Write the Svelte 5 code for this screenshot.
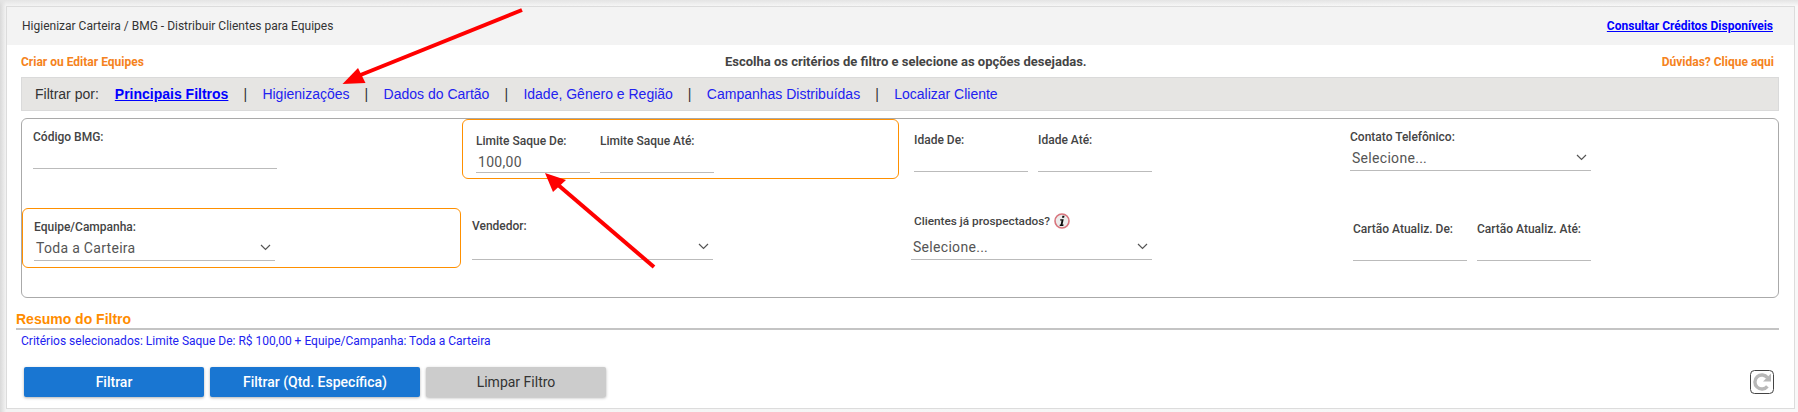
<script>
  const tabs = ['Higienizações', 'Dados do Cartão', 'Idade, Gênero e Região', 'Campanhas Distribuídas', 'Localizar Cliente'];
</script>

{#snippet chevron()}
  <svg class="chev" width="11" height="7" viewBox="0 0 11 7"><path d="M1 1l4.5 4.5L10 1" fill="none" stroke="#555" stroke-width="1.2" /></svg>
{/snippet}

<div class="page">
  <div class="card">
    <header class="head">
      <span class="crumb">Higienizar Carteira / BMG - Distribuir Clientes para Equipes</span>
      <a class="credits" href="#c">Consultar Créditos Disponíveis</a>
    </header>

    <div class="intro">
      <a class="orange" href="#e">Criar ou Editar Equipes</a>
      <strong class="choose">Escolha os critérios de filtro e selecione as opções desejadas.</strong>
      <a class="orange" href="#d">Dúvidas? Clique aqui</a>
    </div>

    <nav class="tabs">
      <span class="by">Filtrar por:</span>
      <a class="tab active" href="#p">Principais Filtros</a>
      {#each tabs as t}
        <span class="sep">|</span>
        <a class="tab" href="#t">{t}</a>
      {/each}
    </nav>

    <section class="panel">
      <div class="cell p11 l11">
        <div class="field w244"><label>Código BMG:</label><div class="ctl"></div></div>
      </div>
      <div class="cell">
        <div class="box top">
          <div class="field w114"><label>Limite Saque De:</label><div class="ctl"><span class="val">100,00</span></div></div>
          <div class="field w114"><label>Limite Saque Até:</label><div class="ctl"></div></div>
        </div>
      </div>
      <div class="cell p14 l12 pair">
        <div class="field w114"><label>Idade De:</label><div class="ctl"></div></div>
        <div class="field w114"><label>Idade Até:</label><div class="ctl"></div></div>
      </div>
      <div class="cell p11 l8">
        <div class="field w241"><label>Contato Telefônico:</label><div class="ctl sel"><span class="val">Selecione...</span>{@render chevron()}</div></div>
      </div>

      <div class="cell">
        <div class="box bottom">
          <div class="field w241"><label>Equipe/Campanha:</label><div class="ctl sel"><span class="val">Toda a Carteira</span>{@render chevron()}</div></div>
        </div>
      </div>
      <div class="cell p11 l10">
        <div class="field w241"><label>Vendedor:</label><div class="ctl sel">{@render chevron()}</div></div>
      </div>
      <div class="cell p6 l9">
        <div class="field w241">
          <label class="lab-i">Clientes já prospectados?
            <svg class="info" width="16" height="16" viewBox="0 0 16 16">
              <circle cx="8" cy="8" r="7" fill="#ececec" stroke="#d8747c" stroke-width="1.6" />
              <path d="M8.4 2.8h2.1l-.4 2H8zM6.3 6.2h3.4l-1.2 5.4h1.1l-.3 1.3H5.6l.3-1.3h.8l.8-4.1H6z" fill="#0c0c0c" />
            </svg>
          </label>
          <div class="ctl tall"><span class="val">Selecione...</span>{@render chevron()}</div>
        </div>
      </div>
      <div class="cell p14 l11 pair">
        <div class="field w114"><label>Cartão Atualiz. De:</label><div class="ctl"></div></div>
        <div class="field w114"><label>Cartão Atualiz. Até:</label><div class="ctl"></div></div>
      </div>
    </section>

    <h2 class="resume">Resumo do Filtro</h2>
    <p class="criteria">Critérios selecionados: Limite Saque De: R$ 100,00 + Equipe/Campanha: Toda a Carteira</p>

    <div class="actions">
      <button class="btn blue b1">Filtrar</button>
      <button class="btn blue b2">Filtrar (Qtd. Específica)</button>
      <button class="btn grey b3">Limpar Filtro</button>
      <span class="refresh">
        <svg width="24" height="24" viewBox="0 0 24 24">
          <rect x="0.5" y="0.5" width="23" height="23" rx="4" fill="#fff" stroke="#444" />
          <path d="M17.4 16.4a7 7 0 1 1 .1-8.6" fill="none" stroke="#b8b8b8" stroke-width="3.4" />
          <path d="M21 3.5v8h-8z" fill="#b8b8b8" />
        </svg>
      </span>
    </div>
  </div>

  <svg class="arrows" width="1798" height="412" viewBox="0 0 1798 412">
    <path d="M522 10L358 76" stroke="#f00" stroke-width="4" fill="none" />
    <path d="M342.5 84L358 68 365.5 83z" fill="#f00" />
    <path d="M654 267L557 184" stroke="#f00" stroke-width="4" fill="none" />
    <path d="M545 173L566 180 553 192z" fill="#f00" />
  </svg>
</div>

<style>
  :global(body) { margin: 0; background: #f7f7f7; }
  * { box-sizing: border-box; }
  .page {
    position: relative;
    width: 1798px;
    height: 412px;
    padding: 6px 3px 0 6px;
    overflow: hidden;
    background:
      linear-gradient(180deg, #e4e4e4 0, rgba(246, 246, 246, 0) 6px),
      linear-gradient(90deg, #d9d9d9 0, #f3f3f3 6px, #f8f8f8 100%);
    font-family: Roboto, sans-serif;
    color: #444;
  }
  .card {
    height: 403px;
    background: #fff;
    border: 1px solid #dcdcdc;
    display: flex;
    flex-direction: column;
  }
  .head {
    height: 38px;
    flex: none;
    background: #f3f3f3;
    display: flex;
    justify-content: space-between;
    align-items: center;
    padding: 0 21px 1px 15px;
    font-size: 12px;
  }
  .crumb { color: #333; }
  .credits { color: #00f; font-weight: 700; text-decoration: underline; }
  .intro {
    height: 32px;
    flex: none;
    display: flex;
    justify-content: space-between;
    align-items: center;
    padding: 1px 20px 0 14px;
    font-size: 12px;
  }
  .orange { color: #f58220; font-weight: 700; text-decoration: none; }
  .choose { color: #444; font-weight: 700; font-size: 13px; margin-left: 6px; }
  .tabs {
    height: 34px;
    margin: 0 15px 0 14px;
    flex: none;
    display: flex;
    align-items: center;
    padding: 0 0 1px 13px;
    background: #e6e5e3;
    border: 1px solid #dadada;
    font-family: "Liberation Sans", Arial, sans-serif;
    font-size: 14px;
    color: #333;
  }
  .by { margin-right: 16px; }
  .tab { color: #2222f0; text-decoration: none; }
  .tab.active { color: #00f; font-weight: 700; text-decoration: underline; }
  .sep { margin: 0 15px 0 15px; width: 4px; }
  .panel {
    height: 180px;
    margin: 7px 15px 0 14px;
    flex: none;
    border: 1px solid #aaa;
    border-radius: 6px;
    display: grid;
    grid-template-columns: repeat(4, 440px);
    grid-template-rows: 89px 89px;
  }
  .pair { display: flex; gap: 10px; }
  .p6 { padding-top: 6px; }
  .p11 { padding-top: 11px; }
  .p14 { padding-top: 14px; }
  .l8 { padding-left: 8px; }
  .l9 { padding-left: 9px; }
  .l10 { padding-left: 10px; }
  .l11 { padding-left: 11px; }
  .l12 { padding-left: 12px; }
  .box {
    border: 1px solid #ff9000;
    border-radius: 6px;
    display: flex;
    gap: 10px;
  }
  .box.top { width: 437px; height: 60px; padding: 14px 0 0 13px; }
  .box.bottom { width: 439px; height: 60px; padding: 11px 0 0 11px; }
  .field { display: flex; flex-direction: column; flex: none; }
  .w244 { width: 244px; }
  .w241 { width: 241px; }
  .w114 { width: 114px; }
  label {
    display: flex;
    align-items: center;
    height: 14px;
    font-size: 12px;
    font-weight: 500;
    color: #444;
    white-space: nowrap;
  }
  .lab-i { gap: 4px; margin-left: 3px; font-size: 11.8px; }
  .info { flex: none; }
  .ctl {
    height: 25px;
    border-bottom: 1px solid #bbb;
    display: flex;
    align-items: flex-end;
    justify-content: space-between;
    padding: 0 5px 0 2px;
    position: relative;
  }
  .sel { height: 27px; padding-bottom: 2px; }
  .tall { height: 32px; padding-bottom: 2px; }
  .val { font-size: 14px; line-height: 20px; color: #555; letter-spacing: 0.3px; }
  .chev { position: absolute; right: 4px; bottom: 9px; }
  .resume {
    margin: 12px 0 0 9px;
    height: 18px;
    line-height: 18px;
    font-family: "Liberation Sans", Arial, sans-serif;
    font-size: 14px;
    font-weight: 700;
    color: #ff8c00;
  }
  .criteria {
    margin: 0 15px 0 9px;
    padding: 3px 0 0 5px;
    height: 24px;
    border-top: 2px solid #c4c4c4;
    font-size: 12px;
    line-height: 17px;
    color: #2222f0;
  }
  .actions { display: flex; gap: 6px; margin: 15px 0 0 17px; align-items: flex-start; }
  .btn {
    height: 30px;
    border: 0;
    border-radius: 2px;
    font-family: Roboto, sans-serif;
    font-size: 14px;
    font-weight: 500;
    box-shadow: 0 1px 3px rgba(0, 0, 0, 0.3);
    padding: 0;
  }
  .blue { background: #1976d2; color: #fff; }
  .grey { background: #ccc; color: #333; font-weight: 400; }
  .b1 { width: 180px; }
  .b2 { width: 210px; }
  .b3 { width: 180px; }
  .refresh { margin-left: auto; margin-right: 20px; margin-top: 3px; height: 24px; }
  .arrows { position: absolute; left: 0; top: 0; pointer-events: none; }
</style>
